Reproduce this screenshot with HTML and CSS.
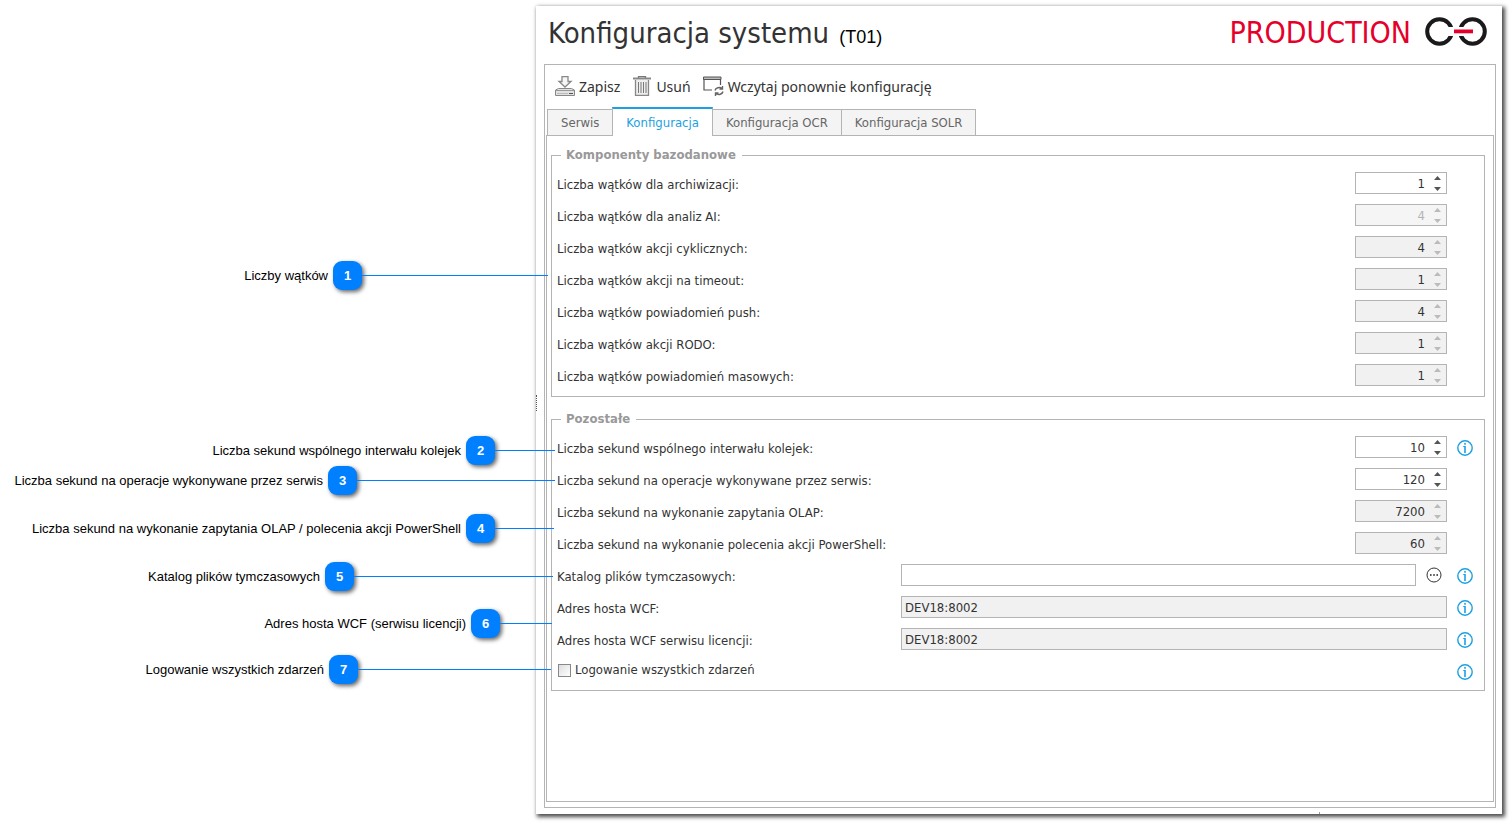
FILE: index.html
```
<!DOCTYPE html>
<html lang="pl">
<head>
<meta charset="utf-8">
<title>Konfiguracja systemu</title>
<link rel="stylesheet" href="styles.css">
</head>
<body>
<svg class="sprite" aria-hidden="true">
  <symbol id="info" viewBox="0 0 16 16">
    <circle cx="8" cy="8" r="7.2" fill="none" stroke="#1ba1e2" stroke-width="1.4"/>
    <path d="M7.2 3h1.6v1.700H7.200zM6.200 6h2.600v7H7.200V7h-1z" fill="#1ba1e2"/>
  </symbol>
  <symbol id="up" viewBox="0 0 7 4"><path d="M3.5 0 7 4H0z" fill="currentColor"/></symbol>
  <symbol id="down" viewBox="0 0 7 4"><path d="M0 0h7L3.5 4z" fill="currentColor"/></symbol>
</svg>

<main class="window">
  <span class="splitter"></span>
  <span class="tick"></span>
  <header class="header">
    <h1 class="title">Konfiguracja systemu</h1>
    <span class="code">(T01)</span>
    <span class="env">PRODUCTION</span>
    <svg class="logo" viewBox="0 0 62 29" role="img" aria-label="Logo">
      <g fill="none" stroke="#1a1a1c" stroke-width="4">
        <circle cx="14.500" cy="14.500" r="12.300"/>
        <circle cx="47.500" cy="14.500" r="12.300"/>
      </g>
      <path d="M20 10h22v9H20z" fill="#fff"/>
      <path d="M29 12.500h19v3.800H29z" fill="#e4002b"/>
    </svg>
  </header>

  <section class="frame">
    <div class="toolbar">
      <button class="tool" type="button">
        <svg class="tool-icon" viewBox="0 0 20 20" fill="none" stroke="#888" stroke-width="1">
          <path d="M7 .5h6v5h3L10 11 4 5.500h3z" fill="#f6f6f6" stroke-width="1.300"/>
          <path d="M3.500 12.500h13l3 1.500v5.500H.5V14z" fill="#e2e2e2"/>
          <path d="M.5 14.500h19" stroke="#999"/><path d="M2 17.500h11" stroke="#bbb"/><path d="M14 17.500h4" stroke="#555"/>
        </svg>
        <span>Zapisz</span>
      </button>
      <button class="tool" type="button">
        <svg class="tool-icon" viewBox="0 0 20 20" fill="none" stroke="#777">
          <path d="M6.500 2V.5h7V2" stroke-width="1.300"/>
          <path d="M1 2.500h18" stroke-width="2" stroke="#888"/>
          <path d="M3.500 4v15.500h13V4" fill="#eee" stroke="#888" stroke-width="1.300"/>
          <path d="M6.500 6v11M9 6v11M11.500 6v11M14 6v11" stroke="#777"/>
        </svg>
        <span>Usuń</span>
      </button>
      <button class="tool" type="button">
        <svg class="tool-icon tool-icon-wide" viewBox="0 0 21 20" fill="none" stroke="#555">
          <path d="M.5 1h17.500v2.500H.5z" fill="#bbb"/>
          <path d="M1 3v11h8M17.500 3.500V9" stroke-width="1.200"/>
          <path d="M12 14.500a4.200 3.500 0 0 1 7-2M19.500 10v3h-3M20 15.500a4.200 3.500 0 0 1-7 2M12.500 20v-3h3" stroke="#666" stroke-width="1.400"/>
        </svg>
        <span>Wczytaj ponownie konfigurację</span>
      </button>
    </div>

    <div class="tabs" role="tablist">
      <button class="tab" type="button" role="tab">Serwis</button>
      <button class="tab tab-active" type="button" role="tab" aria-selected="true">Konfiguracja</button>
      <button class="tab" type="button" role="tab">Konfiguracja OCR</button>
      <button class="tab" type="button" role="tab">Konfiguracja SOLR</button>
    </div>

    <form class="panel">
      <fieldset class="group">
        <legend class="legend">Komponenty bazodanowe</legend>
        <div class="row">
          <label for="t1">Liczba wątków dla archiwizacji:</label>
          <div class="number"><input id="t1" type="number" value="1"><span class="spin"><button type="button" aria-label="Zwiększ"><svg><use href="#up"/></svg></button><button type="button" aria-label="Zmniejsz"><svg><use href="#down"/></svg></button></span></div>
        </div>
        <div class="row">
          <label for="t2">Liczba wątków dla analiz AI:</label>
          <div class="number locked"><input id="t2" type="number" value="4" disabled><span class="spin"><button type="button" aria-label="Zwiększ" disabled><svg><use href="#up"/></svg></button><button type="button" aria-label="Zmniejsz" disabled><svg><use href="#down"/></svg></button></span></div>
        </div>
        <div class="row">
          <label for="t3">Liczba wątków akcji cyklicznych:</label>
          <div class="number locked"><input id="t3" type="number" value="4" readonly><span class="spin"><button type="button" aria-label="Zwiększ" disabled><svg><use href="#up"/></svg></button><button type="button" aria-label="Zmniejsz" disabled><svg><use href="#down"/></svg></button></span></div>
        </div>
        <div class="row">
          <label for="t4">Liczba wątków akcji na timeout:</label>
          <div class="number locked"><input id="t4" type="number" value="1" readonly><span class="spin"><button type="button" aria-label="Zwiększ" disabled><svg><use href="#up"/></svg></button><button type="button" aria-label="Zmniejsz" disabled><svg><use href="#down"/></svg></button></span></div>
        </div>
        <div class="row">
          <label for="t5">Liczba wątków powiadomień push:</label>
          <div class="number locked"><input id="t5" type="number" value="4" readonly><span class="spin"><button type="button" aria-label="Zwiększ" disabled><svg><use href="#up"/></svg></button><button type="button" aria-label="Zmniejsz" disabled><svg><use href="#down"/></svg></button></span></div>
        </div>
        <div class="row">
          <label for="t6">Liczba wątków akcji RODO:</label>
          <div class="number locked"><input id="t6" type="number" value="1" readonly><span class="spin"><button type="button" aria-label="Zwiększ" disabled><svg><use href="#up"/></svg></button><button type="button" aria-label="Zmniejsz" disabled><svg><use href="#down"/></svg></button></span></div>
        </div>
        <div class="row">
          <label for="t7">Liczba wątków powiadomień masowych:</label>
          <div class="number locked"><input id="t7" type="number" value="1" readonly><span class="spin"><button type="button" aria-label="Zwiększ" disabled><svg><use href="#up"/></svg></button><button type="button" aria-label="Zmniejsz" disabled><svg><use href="#down"/></svg></button></span></div>
        </div>
      </fieldset>

      <fieldset class="group">
        <legend class="legend">Pozostałe</legend>
        <div class="row">
          <label for="s1">Liczba sekund wspólnego interwału kolejek:</label>
          <div class="number"><input id="s1" type="number" value="10"><span class="spin"><button type="button" aria-label="Zwiększ"><svg><use href="#up"/></svg></button><button type="button" aria-label="Zmniejsz"><svg><use href="#down"/></svg></button></span></div>
          <button class="icon-button" type="button" aria-label="Informacja"><svg><use href="#info"/></svg></button>
        </div>
        <div class="row">
          <label for="s2">Liczba sekund na operacje wykonywane przez serwis:</label>
          <div class="number"><input id="s2" type="number" value="120"><span class="spin"><button type="button" aria-label="Zwiększ"><svg><use href="#up"/></svg></button><button type="button" aria-label="Zmniejsz"><svg><use href="#down"/></svg></button></span></div>
        </div>
        <div class="row">
          <label for="s3">Liczba sekund na wykonanie zapytania OLAP:</label>
          <div class="number locked"><input id="s3" type="number" value="7200" readonly><span class="spin"><button type="button" aria-label="Zwiększ" disabled><svg><use href="#up"/></svg></button><button type="button" aria-label="Zmniejsz" disabled><svg><use href="#down"/></svg></button></span></div>
        </div>
        <div class="row">
          <label for="s4">Liczba sekund na wykonanie polecenia akcji PowerShell:</label>
          <div class="number locked"><input id="s4" type="number" value="60" readonly><span class="spin"><button type="button" aria-label="Zwiększ" disabled><svg><use href="#up"/></svg></button><button type="button" aria-label="Zmniejsz" disabled><svg><use href="#down"/></svg></button></span></div>
        </div>
        <div class="row">
          <label for="s5">Katalog plików tymczasowych:</label>
          <div class="path">
            <input class="text" id="s5" type="text">
            <button class="icon-button" type="button" aria-label="Wybierz katalog">
              <svg viewBox="0 0 16 16"><circle cx="8" cy="8" r="7" fill="none" stroke="#333"/><path d="M4 7.200h1.600v1.600H4zM7.200 7.200h1.600v1.600H7.200zM10.400 7.200H12v1.600h-1.600z" fill="#222"/></svg>
            </button>
          </div>
          <button class="icon-button" type="button" aria-label="Informacja"><svg><use href="#info"/></svg></button>
        </div>
        <div class="row">
          <label for="s6">Adres hosta WCF:</label>
          <input class="text" id="s6" type="text" value="DEV18:8002" readonly>
          <button class="icon-button" type="button" aria-label="Informacja"><svg><use href="#info"/></svg></button>
        </div>
        <div class="row">
          <label for="s7">Adres hosta WCF serwisu licencji:</label>
          <input class="text" id="s7" type="text" value="DEV18:8002" readonly>
          <button class="icon-button" type="button" aria-label="Informacja"><svg><use href="#info"/></svg></button>
        </div>
        <div class="row">
          <label class="check"><input type="checkbox">Logowanie wszystkich zdarzeń</label>
          <span></span>
          <button class="icon-button" type="button" aria-label="Informacja"><svg><use href="#info"/></svg></button>
        </div>
      </fieldset>
    </form>
  </section>
</main>

<div class="callout callout-1"><span>Liczby wątków</span><b class="badge">1</b></div>
<div class="callout callout-2"><span>Liczba sekund wspólnego interwału kolejek</span><b class="badge">2</b></div>
<div class="callout callout-3"><span>Liczba sekund na operacje wykonywane przez serwis</span><b class="badge">3</b></div>
<div class="callout callout-4"><span>Liczba sekund na wykonanie zapytania OLAP / polecenia akcji PowerShell</span><b class="badge">4</b></div>
<div class="callout callout-5"><span>Katalog plików tymczasowych</span><b class="badge">5</b></div>
<div class="callout callout-6"><span>Adres hosta WCF (serwisu licencji)</span><b class="badge">6</b></div>
<div class="callout callout-7"><span>Logowanie wszystkich zdarzeń</span><b class="badge">7</b></div>
</body>
</html>
```
FILE: styles.css
```
:root {
  --ui: "DejaVu Sans Condensed", "DejaVu Sans", sans-serif;
  --line: #b4b4b4;
  --text: #333;
}

* { box-sizing: border-box; }

body {
  position: relative;
  display: flex;
  min-height: 100vh;
  margin: 0;
  padding: 6px 10px 10px 536px;
  background: #fff;
  color: var(--text);
  font: 13px/16px var(--ui);
}

button, input { font: inherit; color: inherit; }
button { padding: 0; border: 0; background: none; }

.sprite { position: absolute; width: 0; height: 0; }

.window {
  position: relative;
  flex: 1;
  display: flex;
  flex-direction: column;
  min-width: 0;
  padding: 0 6px 6px 8px;
  background: #fff;
  box-shadow: 2px 2px 4px 1px rgba(0, 0, 0, .7);
}

.splitter {
  position: absolute;
  top: 389px;
  left: 0;
  height: 16px;
  border-left: 1px dotted #555;
}

.tick {
  position: absolute;
  right: 182px;
  bottom: 0;
  width: 1px;
  height: 2px;
  background: #999;
}

.header {
  display: flex;
  align-items: baseline;
  height: 58px;
  padding: 9px 9px 0 4px;
}

.title, .env {
  margin: 0;
  font-size: 30px;
  font-weight: normal;
  line-height: 36px;
}
.title { margin-right: 10px; font-size: 29px; }
.env { margin-left: auto; color: #e4002b; }
.code { color: #000; font: 18px/24px "Liberation Sans", Arial, sans-serif; }
.logo { align-self: flex-start; width: 62px; height: 29px; margin: 2px 0 0 14px; }

.frame {
  flex: 1;
  display: flex;
  flex-direction: column;
  padding: 0 1px 5px 1px;
  border: 1px solid var(--line);
}

.toolbar {
  display: flex;
  gap: 12px;
  height: 42px;
  padding: 0 0 0 9px;
}

.tool {
  display: flex;
  align-items: center;
  gap: 4px;
  font: 14px/20px "Noto Sans", sans-serif;
}
.tool span { padding-top: 2px; }
.tool-icon { width: 20px; height: 20px; }
.tool-icon-wide { width: 21px; }

.tabs {
  position: relative;
  z-index: 1;
  display: flex;
  align-items: flex-end;
  height: 29px;
  padding-left: 1px;
}

.tab {
  position: relative;
  height: 27px;
  margin-right: -1px;
  padding: 0 13px;
  border: 1px solid var(--line);
  background: #f4f4f4;
  color: #666;
}
.tabs .tab-active {
  z-index: 1;
  height: 29px;
  border-top: 2px solid #1ba1e2;
  border-bottom: 0;
  background: #fff;
  color: #1ba1e2;
}

.panel {
  flex: 1;
  display: flex;
  flex-direction: column;
  gap: 13px;
  margin-top: -1px;
  padding: 10px 8px;
  border: 1px solid var(--line);
}

.group {
  margin: 0 0 0 -4px;
  padding: 4px 11px 4px 5px;
  border: 1px solid var(--line);
}
.group:last-child { padding-bottom: 2px; }

.legend {
  margin-left: 4px;
  padding: 0 6px 0 5px;
  color: #999;
  font-weight: bold;
  line-height: 18px;
}

.row {
  display: grid;
  grid-template-columns: 344px 1fr 16px;
  align-items: center;
  height: 32px;
}
.row > label { padding-top: 2px; }
.row > :nth-child(2) { margin: 0 10px 2px 0; }

.number { position: relative; justify-self: end; width: 92px; }
.number input {
  display: block;
  width: 100%;
  height: 22px;
  padding: 0 21px 0 4px;
  border: 1px solid var(--line);
  background: #fff;
  text-align: right;
  appearance: textfield;
}
.number input::-webkit-inner-spin-button { display: none; }

.number.locked input, .text:read-only { background: #f1f1f1; }
.number.locked input:disabled { background: #f5f5f5; color: #b4b4b4; }

.spin {
  position: absolute;
  top: 0;
  right: 6px;
  display: flex;
  flex-direction: column;
  justify-content: space-between;
  height: 22px;
  padding: 4px 0 3px;
  color: #555;
}
.locked .spin { color: #bbb; }
.spin button { display: flex; color: inherit; }
.spin svg { width: 7px; height: 4px; }

.text {
  flex: 1;
  min-width: 0;
  height: 22px;
  padding: 0 3px;
  border: 1px solid var(--line);
  background: #fff;
}

.path { display: flex; align-items: center; gap: 10px; padding-right: 5px; }

.icon-button { display: flex; flex: none; }
.icon-button svg { width: 16px; height: 16px; }

.row > .check { display: flex; align-items: center; gap: 4px; padding: 0 0 4px; }
.check input {
  width: 13px;
  height: 13px;
  margin: 0 0 0 1px;
  border: 1px solid #888;
  background: linear-gradient(135deg, #ddd, #fff);
  appearance: none;
}
.check input:checked { background: #1ba1e2; }

.callout {
  position: absolute;
  left: 0;
  display: flex;
  align-items: center;
  justify-content: flex-end;
  gap: 5px;
  height: 29px;
  color: #000;
  font: 13px/17px "Liberation Sans", Arial, sans-serif;
  white-space: nowrap;
}
.callout::after {
  content: "";
  height: 1px;
  margin-left: -5px;
  background: #0080ff;
}
.badge {
  width: 29px;
  height: 29px;
  border-radius: 9px;
  background: #0080ff;
  box-shadow: 2px 2px 4px rgba(0, 0, 0, .6);
  color: #fff;
  font-size: 13px;
  line-height: 29px;
  text-align: center;
}

.callout-1 { top: 261px; width: 548px; }
.callout-1::after { width: 186px; }
.callout-2 { top: 436px; width: 555px; }
.callout-2::after { width: 60px; }
.callout-3 { top: 466px; width: 555px; }
.callout-3::after { width: 198px; }
.callout-4 { top: 514px; width: 554px; }
.callout-4::after { width: 59px; }
.callout-5 { top: 562px; width: 553px; }
.callout-5::after { width: 199px; }
.callout-6 { top: 609px; width: 552px; }
.callout-6::after { width: 52px; }
.callout-7 { top: 655px; width: 551px; }
.callout-7::after { width: 193px; }
```
